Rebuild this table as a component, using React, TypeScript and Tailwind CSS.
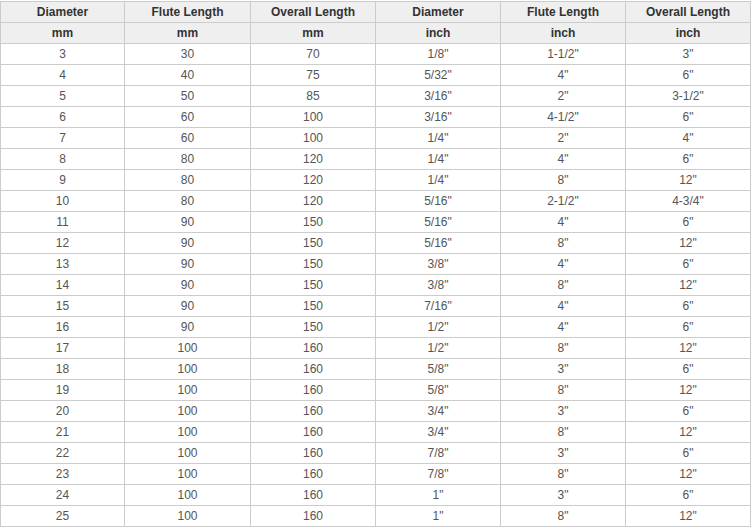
import React from "react";

const rows: string[][] = [
  ["3", "30", "70", "1/8\"", "1-1/2\"", "3\""],
  ["4", "40", "75", "5/32\"", "4\"", "6\""],
  ["5", "50", "85", "3/16\"", "2\"", "3-1/2\""],
  ["6", "60", "100", "3/16\"", "4-1/2\"", "6\""],
  ["7", "60", "100", "1/4\"", "2\"", "4\""],
  ["8", "80", "120", "1/4\"", "4\"", "6\""],
  ["9", "80", "120", "1/4\"", "8\"", "12\""],
  ["10", "80", "120", "5/16\"", "2-1/2\"", "4-3/4\""],
  ["11", "90", "150", "5/16\"", "4\"", "6\""],
  ["12", "90", "150", "5/16\"", "8\"", "12\""],
  ["13", "90", "150", "3/8\"", "4\"", "6\""],
  ["14", "90", "150", "3/8\"", "8\"", "12\""],
  ["15", "90", "150", "7/16\"", "4\"", "6\""],
  ["16", "90", "150", "1/2\"", "4\"", "6\""],
  ["17", "100", "160", "1/2\"", "8\"", "12\""],
  ["18", "100", "160", "5/8\"", "3\"", "6\""],
  ["19", "100", "160", "5/8\"", "8\"", "12\""],
  ["20", "100", "160", "3/4\"", "3\"", "6\""],
  ["21", "100", "160", "3/4\"", "8\"", "12\""],
  ["22", "100", "160", "7/8\"", "3\"", "6\""],
  ["23", "100", "160", "7/8\"", "8\"", "12\""],
  ["24", "100", "160", "1\"", "3\"", "6\""],
  ["25", "100", "160", "1\"", "8\"", "12\""],
];

const head1 = ["Diameter", "Flute Length", "Overall Length", "Diameter", "Flute Length", "Overall Length"];
const head2 = ["mm", "mm", "mm", "inch", "inch", "inch"];
const widths = ["w-[124px]", "w-[126px]", "w-[125px]", "w-[125px]", "w-[125px]", "w-[125px]"];

export default function App() {
  return (
    <div className="w-[752px] h-[528px] bg-white pt-px" style={{ fontFamily: '"Liberation Sans", Arial, sans-serif' }}>
      <table className="table-fixed border-collapse w-[751px] text-[12px]">
        <colgroup>
          {widths.map((w, i) => (
            <col key={i} className={w} />
          ))}
        </colgroup>
        <thead>
          <tr className="bg-[#efefef]">
            {head1.map((h, i) => (
              <th key={i} className="border border-[#cccccc] h-[21px] p-0 font-bold text-[#333333] text-center leading-none">
                {h}
              </th>
            ))}
          </tr>
          <tr className="bg-[#efefef]">
            {head2.map((h, i) => (
              <th key={i} className="border border-[#cccccc] h-[21px] p-0 font-bold text-[#333333] text-center leading-none">
                {h}
              </th>
            ))}
          </tr>
        </thead>
        <tbody>
          {rows.map((r, ri) => (
            <tr key={ri}>
              {r.map((c, ci) => (
                <td key={ci} className="border border-[#cccccc] h-[21px] p-0 text-[#555555] text-center leading-none">
                  {c}
                </td>
              ))}
            </tr>
          ))}
        </tbody>
      </table>
    </div>
  );
}
